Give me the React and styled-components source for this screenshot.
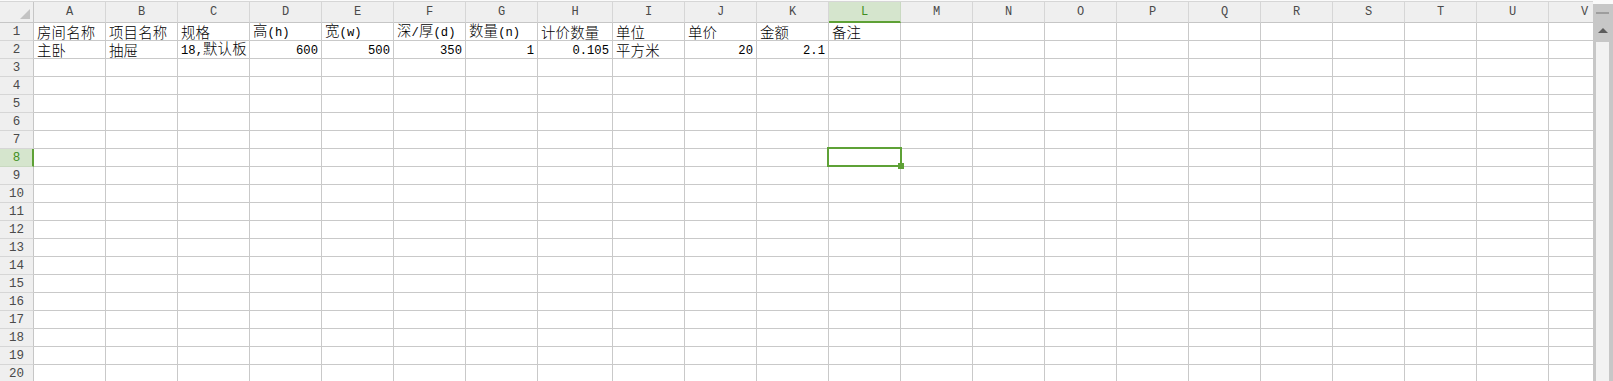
import React from "react"
import styled, { createGlobalStyle } from "styled-components"

const GlobalStyle = createGlobalStyle`
  html, body {
    margin: 0;
    padding: 0;
    background: #fff;
    overflow: hidden;
  }
`

const GREEN = "#5ea136"
const GREEN_TEXT = "#3f8f1f"
const GREEN_BG = "#d5e5cd"
const LINE = "#c9c9c9"
const HEAD_BG = "#efefef"

const LETTERS = "ABCDEFGHIJKLMNOPQRSTUV".split("")
const WIDTHS = LETTERS.map((l) => (l === "H" ? 75 : 72))
const ROW_COUNT = 20
const SEL_COL = "L"
const SEL_ROW = 8

const DATA = {
  1: [
    "房间名称", "项目名称", "规格", "高(h)", "宽(w)", "深/厚(d)",
    "数量(n)", "计价数量", "单位", "单价", "金额", "备注",
  ],
  2: [
    "主卧", "抽屉", "18,默认板", 600, 500, 350, 1, 0.105, "平方米", 20, 2.1, "",
  ],
}

const Wrap = styled.div`
  display: flex;
  height: 381px;
  width: 1613px;
  overflow: hidden;
`

const Sheet = styled.div`
  flex: 0 0 1593px;
  display: flex;
  flex-direction: column;
  overflow: hidden;
`

const TopStrip = styled.div`
  flex: 0 0 1px;
  background: #fafafa;
  border-bottom: 1px solid #d6d6d6;
`

const Grid = styled.div`
  display: grid;
  grid-template-columns: 34px ${WIDTHS.map((w) => `${w}px`).join(" ")};
  grid-template-rows: 21px;
  grid-auto-rows: 18px;
  width: max-content;
`

const Cell = styled.div`
  position: relative;
  box-sizing: border-box;
  border-right: 1px solid ${LINE};
  border-bottom: 1px solid ${LINE};
  display: flex;
  align-items: center;
  justify-content: ${(p) => (p.$num ? "flex-end" : "flex-start")};
  padding: ${(p) => (p.$num ? "0 3px 0 0" : "0 0 0 3px")};
  white-space: nowrap;
  color: #000;
`

const Content = styled.span`
  display: block;
  line-height: 17px;
  white-space: nowrap;
`

const HeadCell = styled.div`
  box-sizing: border-box;
  background: ${(p) => (p.$active ? GREEN_BG : HEAD_BG)};
  border-right: 1px solid ${(p) => (p.$active ? "#c9d9c1" : "#d6d6d6")};
  border-bottom: ${(p) => (p.$active ? `2px solid ${GREEN}` : "1px solid #c6c6c6")};
  display: flex;
  align-items: center;
  justify-content: center;
  padding-top: ${(p) => (p.$active ? "1px" : "0")};
  font-family: "Liberation Mono", "DejaVu Sans Mono", monospace;
  font-size: 12px;
  color: ${(p) => (p.$active ? GREEN_TEXT : "#4a4a4a")};
`

const RowHead = styled.div`
  box-sizing: border-box;
  background: ${(p) => (p.$active ? GREEN_BG : HEAD_BG)};
  border-bottom: 1px solid ${(p) => (p.$active ? "#c9d9c1" : "#d6d6d6")};
  border-right: ${(p) => (p.$active ? `2px solid ${GREEN}` : "1px solid #c6c6c6")};
  display: flex;
  align-items: center;
  justify-content: center;
  padding-left: ${(p) => (p.$active ? "1px" : "0")};
  font-family: "Liberation Mono", "DejaVu Sans Mono", monospace;
  font-size: 12.5px;
  color: ${(p) => (p.$active ? GREEN_TEXT : "#4a4a4a")};
`

const Corner = styled(HeadCell)`
  justify-content: flex-end;
  align-items: flex-end;
  padding: 0 3px 3px 0;
  border-right: 1px solid #c6c6c6;
`

const Latin = styled.span`
  font-family: "Liberation Mono", "DejaVu Sans Mono", monospace;
  font-size: 12.2px;
`

const Cjk = styled.span`
  font-family: "Noto Sans CJK SC", "Noto Sans", sans-serif;
  font-size: 14.4px;
  font-weight: 300;
  letter-spacing: 0.2px;
`

const Selection = styled.div`
  position: absolute;
  left: -2px;
  top: -2px;
  width: 75px;
  height: 20px;
  box-sizing: border-box;
  border: 2px solid ${GREEN};
  z-index: 2;
  pointer-events: none;
`

const Handle = styled.div`
  position: absolute;
  right: -4px;
  bottom: -4px;
  width: 6px;
  height: 6px;
  background: ${GREEN};
`

const ScrollBar = styled.div`
  flex: 0 0 20px;
  display: flex;
  flex-direction: column;
  background: #fafafa;
`

const ScrollBody = styled.div`
  flex: 1;
  margin-top: 4px;
  background: #c7c7c7;
  display: flex;
  flex-direction: column;
  align-items: center;
  padding: 8px 4px 0 3px;
`

const Dash = styled.div`
  width: 13px;
  height: 2px;
  background: #9d9d9d;
`

const Arrow = styled.div`
  margin-top: 14px;
  width: 0;
  height: 0;
  border-left: 5px solid transparent;
  border-right: 5px solid transparent;
  border-bottom: 5px solid #5c5c5c;
`

const Track = styled.div`
  flex: 1;
  align-self: stretch;
  margin-top: 9px;
  background: #f2f2f2;
`

const RichText = ({ text }) => {
  const parts = String(text).split(/([\u0000-\u024f]+)/).filter(Boolean)
  return (
    <Content>
      {parts.map((part, i) =>
        /^[\u0000-\u024f]+$/.test(part) ? (
          <Latin key={i}>{part}</Latin>
        ) : (
          <Cjk key={i}>{part}</Cjk>
        )
      )}
    </Content>
  )
}

const App = () => {
  const rows = Array.from({ length: ROW_COUNT }, (_, i) => i + 1)

  return (
    <Wrap>
      <GlobalStyle />
      <Sheet>
        <TopStrip />
        <Grid>
          <Corner>
            <svg width="10" height="10" viewBox="0 0 10 10">
              <polygon points="10,0 10,10 0,10" fill="#c3c3c3" />
            </svg>
          </Corner>
          {LETTERS.map((l) => (
            <HeadCell key={l} $active={l === SEL_COL}>
              {l}
            </HeadCell>
          ))}
          {rows.map((r) => (
            <React.Fragment key={r}>
              <RowHead $active={r === SEL_ROW}>{r}</RowHead>
              {LETTERS.map((l, ci) => {
                const value = DATA[r] ? DATA[r][ci] : undefined
                const isNum = typeof value === "number"
                const selected = r === SEL_ROW && l === SEL_COL
                return (
                  <Cell key={l} $num={isNum}>
                    {value !== undefined && value !== "" ? (
                      <RichText text={value} />
                    ) : null}
                    {selected ? (
                      <Selection>
                        <Handle />
                      </Selection>
                    ) : null}
                  </Cell>
                )
              })}
            </React.Fragment>
          ))}
        </Grid>
      </Sheet>
      <ScrollBar>
        <ScrollBody>
          <Dash />
          <Arrow />
          <Track />
        </ScrollBody>
      </ScrollBar>
    </Wrap>
  )
}

export default App
